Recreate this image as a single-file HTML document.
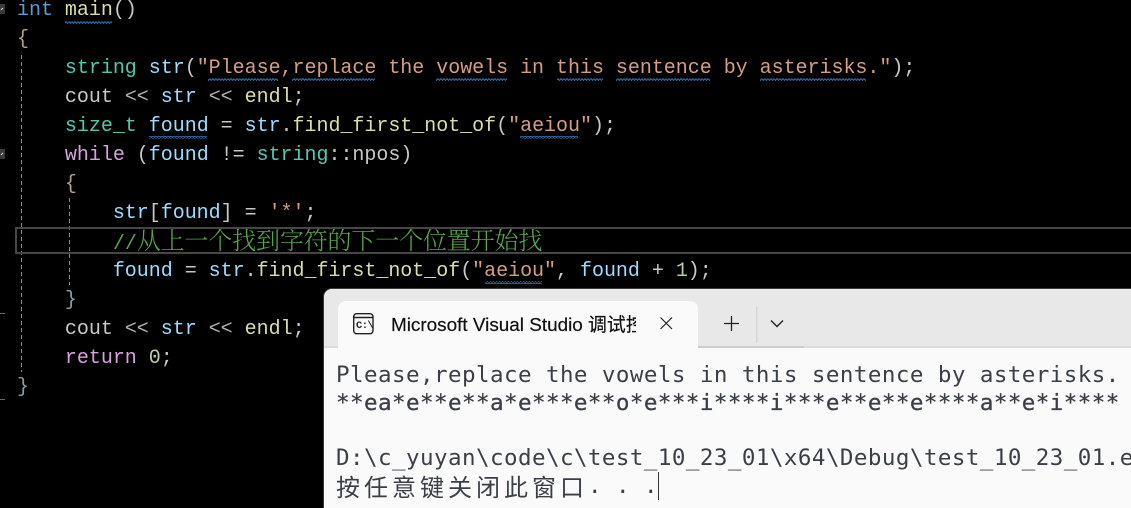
<!DOCTYPE html>
<html><head><meta charset="utf-8"><style>
html,body{margin:0;padding:0;background:#000;}
#r{position:relative;width:1131px;height:508px;overflow:hidden;background:#000;}
.l{position:absolute;left:17px;height:29px;font:20px/29px "Liberation Mono","Noto Serif CJK SC",monospace;letter-spacing:-.025px;white-space:pre;color:#c8c8c8;}
.k{color:#569cd6}.f{color:#dcdcaa}.c{color:#d8a0df}.t{color:#4ec9b0}.v{color:#9cdcfe}.s{color:#d69d85}.n{color:#b5cea8}.o{color:#b4b4b4}.b{color:#b8a080}.e{color:#8aa0a8}.g{color:#57a64a}
.a{position:absolute}
.con{position:absolute;left:336px;font:22.5px/28px "DejaVu Sans Mono","Noto Sans CJK SC",monospace;letter-spacing:.45px;white-space:pre;color:#3b3f47;}
</style></head><body><div id="r">
<div class="l" style="top:-4px"><span class="k">int</span> <span class="f">main</span>()</div>
<div class="l" style="top:25px"><span class="b">{</span></div>
<div class="l" style="top:54px">    <span class="t">string</span> <span class="v">str</span>(<span class="s">"Please,replace the vowels in this sentence by asterisks."</span>);</div>
<div class="l" style="top:83px">    <span style="color:#c8c8c8">cout</span> <span class="o">&lt;&lt;</span> <span class="v">str</span> <span class="o">&lt;&lt;</span> <span class="f">endl</span>;</div>
<div class="l" style="top:112px">    <span class="t">size_t</span> <span class="v">found</span> = <span class="v">str</span>.<span class="f">find_first_not_of</span>(<span class="s">"aeiou"</span>);</div>
<div class="l" style="top:141px">    <span class="c">while</span> (<span class="v">found</span> != <span class="t">string</span>::npos)</div>
<div class="l" style="top:170px">    <span class="b">{</span></div>
<div class="l" style="top:199px">        <span class="v">str</span>[<span class="v">found</span>] = <span class="s">'*'</span>;</div>
<div class="l g" style="top:229px;left:113px;font-size:24px;letter-spacing:-.15px;font-weight:300"><span style="font-size:20px">//</span>从上一个找到字符的下一个位置开始找</div>
<div class="l" style="top:257px">        <span class="v">found</span> = <span class="v">str</span>.<span class="f">find_first_not_of</span>(<span class="s">"aeiou"</span>, <span class="v">found</span> + <span class="n">1</span>);</div>
<div class="l" style="top:286px">    <span class="e">}</span></div>
<div class="l" style="top:315px">    <span style="color:#c8c8c8">cout</span> <span class="o">&lt;&lt;</span> <span class="v">str</span> <span class="o">&lt;&lt;</span> <span class="f">endl</span>;</div>
<div class="l" style="top:344px">    <span class="c">return</span> <span class="n">0</span>;</div>
<div class="l" style="top:373px"><span class="e">}</span></div>

<svg class="a" style="left:0;top:0" width="1131" height="508">
<defs><pattern id="w" width="6" height="3" patternUnits="userSpaceOnUse"><path d="M0 .6L1.5 2.4L3 .6L4.5 2.4L6 .6" fill="none" stroke="#2f78b8" stroke-width="1"/></pattern></defs>
<g fill="url(#w)">
<rect x="65" y="21" width="47" height="3"/>
<rect x="208" y="78" width="70" height="3"/>
<rect x="292" y="78" width="83" height="3"/>
<rect x="436" y="78" width="71" height="3"/>
<rect x="557" y="78" width="46" height="3"/>
<rect x="616" y="78" width="94" height="3"/>
<rect x="760" y="78" width="106" height="3"/>
<rect x="149" y="136" width="58" height="3"/>
<rect x="520" y="136" width="58" height="3"/>
<rect x="485" y="281" width="57" height="3"/>
</g>
<line x1="21.5" y1="55" x2="21.5" y2="372" stroke="#8a8a8a" stroke-dasharray="4 3"/>
<line x1="69.5" y1="198" x2="69.5" y2="285" stroke="#8a8a8a" stroke-dasharray="4 3"/>
<rect x="16" y="228" width="1120" height="25" fill="none" stroke="#464646" stroke-width="2"/>
<rect x="0" y="4" width="5" height="10" fill="#3a3a3a"/>
<rect x="0" y="149" width="5" height="10" fill="#3a3a3a"/>
<path d="M1 10L3 8M1 155L3 153" stroke="#ddd" fill="none"/>
<rect x="0" y="313" width="5" height="1" fill="#666"/>
<rect x="0" y="399" width="5" height="1" fill="#666"/>
</svg>

<div class="a" style="left:323px;top:288px;width:820px;height:230px;background:#fafafa;border:1px solid #3a3a3a;border-right:0;border-radius:9px 0 0 0;box-sizing:border-box;overflow:hidden;">
  <div class="a" style="left:0;top:0;width:100%;height:59px;background:#e8e8e8;"></div>
  <div class="a" style="left:0;top:57px;width:100%;height:2px;background:#dcdcdc;"></div>
  <div class="a" style="left:374px;top:57px;width:106px;height:2px;background:#cdcdcd;"></div>
  <div class="a" style="left:14px;top:12px;width:360px;height:48px;background:#fafafa;border-radius:8px 8px 0 0;"></div>
</div>
<svg class="a" style="left:350px;top:310px" width="26" height="26" viewBox="0 0 26 26"><rect x="3.700" y="3.700" width="19.300" height="20" rx="3" fill="none" stroke="#222" stroke-width="1.400"/><line x1="3.700" y1="7.500" x2="23" y2="7.500" stroke="#222" stroke-width="1.400"/></svg>
<div class="a" style="left:356px;top:319px;font:bold 10.500px/14px 'Liberation Mono',monospace;color:#222;letter-spacing:-.6px">C:\</div>
<div class="a" style="left:391px;top:313px;width:245px;height:28px;overflow:hidden;font:18.900px/26px 'Liberation Sans','Noto Sans CJK SC',sans-serif;color:#111;white-space:nowrap;-webkit-text-stroke:.2px #111">Microsoft Visual Studio 调试控制台</div>
<svg class="a" style="left:650px;top:307px" width="140" height="36">
<path d="M10.500 10.500L22 22M22 10.500L10.500 22" stroke="#222" stroke-width="1.200" fill="none"/>
<path d="M81.500 9V24M74 16.500H89" stroke="#222" stroke-width="1.300" fill="none"/>
<rect x="106" y="0" width="1.500" height="36" fill="#d6d6d6"/>
<path d="M121 13.500L127 19.500L133 13.500" stroke="#222" stroke-width="1.400" fill="none"/>
</svg>
<div class="con" style="top:361px">Please,replace the vowels in this sentence by asterisks.</div>
<div class="con" style="top:389px;-webkit-text-stroke:.3px #3b3f47">**ea*e**e**a*e***e**o*e***i****i***e**e**e****a**e*i****</div>
<div class="con" style="top:444px">D:\c_yuyan\code\c\test_10_23_01\x64\Debug\test_10_23_01.exe</div>
<div class="con" style="top:472px;letter-spacing:4px;font-size:24px;font-family:'Noto Sans CJK SC',sans-serif">按任意键关闭此窗口</div>
<div class="con" style="top:472px;left:588px">. . .</div>
<div class="a" style="left:658px;top:472px;width:1px;height:28px;background:#333"></div>
</div></body></html>
